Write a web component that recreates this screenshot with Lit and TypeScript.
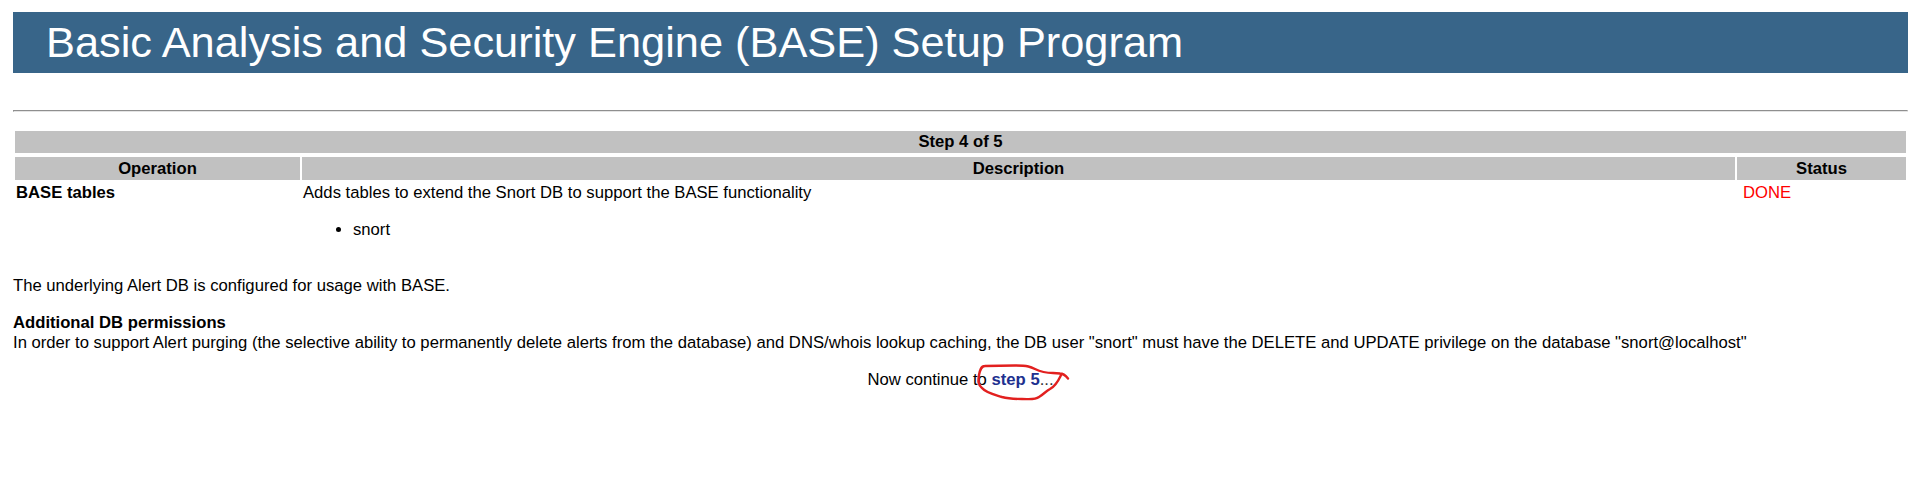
import { LitElement, html, css } from "lit";
import { customElement } from "lit/decorators.js";

@customElement("app-root")
export class AppRoot extends LitElement {
  static styles = css`
    :host { display: block; box-sizing: border-box; height: 487px; overflow: hidden; padding: 12px 12px 0 13px; background: #fff; color: #000; font: 16.66px/20px "Liberation Sans", Arial, sans-serif; }
    .banner { height: 61px; box-sizing: border-box; background: #386589; color: #fff; font-size: 43.35px; line-height: 60px; padding-left: 33px; }
    .rule { height: 2px; box-sizing: border-box; margin-top: 37px; border: 1px solid #8f8f8f; border-right-color: #e4e4e4; border-bottom-color: #e4e4e4; }
    .title { margin: 19px 2px 0; height: 22px; line-height: 22px; background: #c1c1c1; text-align: center; font-weight: bold; }
    table { width: 100%; margin-top: 2px; border-spacing: 2px; table-layout: fixed; border-collapse: separate; }
    th { background: #c1c1c1; height: 21px; padding: 1px; line-height: 21px; }
    td { padding: 1px; vertical-align: top; }
    .op { width: 285px; } .status { width: 169px; }
    .done { color: #f00; padding-left: 6px; }
    ul { margin: 17px 0; padding-left: 50px; }
    .note { margin-top: 16px; }
    .perm { margin-top: 17px; }
    .next { margin-top: 17px; text-align: center; }
    .link { position: relative; display: inline-block; color: #20308f; font-weight: bold; }
    .dots { color: #333; }
    .ring { position: absolute; left: -22px; top: -12px; width: 110px; height: 48px; overflow: visible; }
  `;
  render() {
    return html`
      <header class="banner">Basic Analysis and Security Engine (BASE) Setup Program</header>
      <div class="rule"></div>
      <div class="title">Step 4 of 5</div>
      <table>
        <colgroup><col class="op"><col><col class="status"></colgroup>
        <tr><th>Operation</th><th>Description</th><th>Status</th></tr>
        <tr><td><b>BASE tables</b></td><td>Adds tables to extend the Snort DB to support the BASE functionality<ul><li>snort</li></ul></td><td class="done">DONE</td></tr>
      </table>
      <div class="note">The underlying Alert DB is configured for usage with BASE.</div>
      <div class="perm"><b>Additional DB permissions</b><br>In order to support Alert purging (the selective ability to permanently delete alerts from the database) and DNS/whois lookup caching, the DB user "snort" must have the DELETE and UPDATE privilege on the database "snort@localhost"</div>
      <div class="next">Now continue to <span class="link">step 5<svg class="ring" viewBox="0 0 110 48" fill="none" stroke="#e2201f" stroke-width="2.4" stroke-linecap="round" stroke-linejoin="round"><path d="M15 8C11 8 10 12 9 17C8 23 8 27 12 30C16 35 26 37 32 39C39 41 46 41 52 41C60 41 65 42 69 39C74 36 76 33 80 31C87 27 89 21 91.500 16M15 8L45 7.500C58 7.500 61 9 65 11C71 14 77 15 83 15L90 15.500C94 15.500 96 18 98 20.500"/></svg></span><span class="dots">...</span></div>
    `;
  }
}
